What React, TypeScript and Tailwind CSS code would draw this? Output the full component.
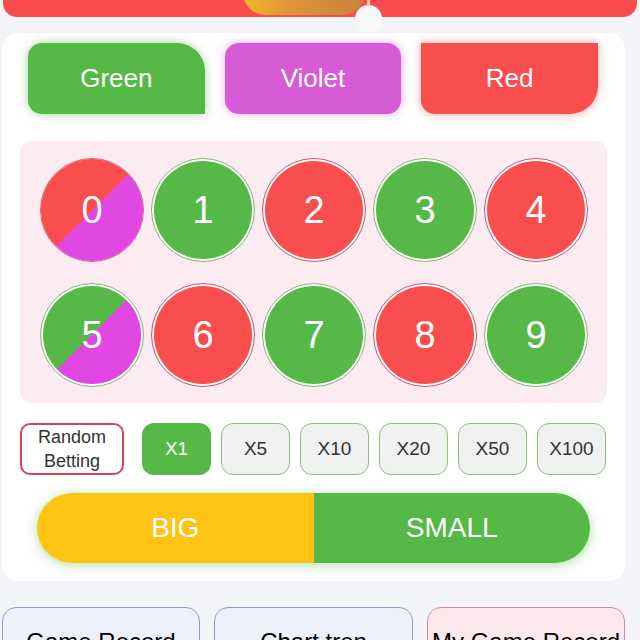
const numbers = [
  { n: 0, bg: "bg-[linear-gradient(135deg,#fa4d4d_50%,#e047e3_50%)]", ring: "border-[#d9687c]", gap: false },
  { n: 1, bg: "bg-[#56b947]", ring: "border-[#7fba6f]", gap: true },
  { n: 2, bg: "bg-[#fa4d4d]", ring: "border-[#c4586c]", gap: true },
  { n: 3, bg: "bg-[#56b947]", ring: "border-[#7fba6f]", gap: true },
  { n: 4, bg: "bg-[#fa4d4d]", ring: "border-[#c4586c]", gap: true },
  { n: 5, bg: "bg-[linear-gradient(135deg,#56b947_50%,#e047e3_50%)]", ring: "border-[#7fba6f]", gap: true },
  { n: 6, bg: "bg-[#fa4d4d]", ring: "border-[#c4586c]", gap: true },
  { n: 7, bg: "bg-[#56b947]", ring: "border-[#7fba6f]", gap: true },
  { n: 8, bg: "bg-[#fa4d4d]", ring: "border-[#c4586c]", gap: true },
  { n: 9, bg: "bg-[#56b947]", ring: "border-[#7fba6f]", gap: true },
];

const multipliers = ["X1", "X5", "X10", "X20", "X50", "X100"];

export default function App() {
  return (
    <div className="w-[640px] h-[640px] overflow-hidden bg-[#f3f4f8] font-['Liberation_Sans',Arial,sans-serif]">
      {/* top banner (only its bottom edge is visible) */}
      <div className="relative mx-[3px] h-[17px] rounded-b-[14px] bg-[#fa4b4e]">
        <div className="absolute left-[240px] top-[-30px] h-[45px] w-[122px] rounded-full bg-[linear-gradient(90deg,#f2b52a,#dc9538_40%,#c9823c)]" />
        <div className="absolute left-[352px] top-[5px] h-[27px] w-[27px] rounded-full bg-[#f6f8fa]" />
        <div className="absolute left-[364px] top-[0px] h-[6px] w-[3px] bg-[#e9c7a0]" />
      </div>

      {/* betting card */}
      <div className="mx-[2px] mt-[16px] w-[623px] rounded-[16px] bg-white pb-[18px] pt-[10px]">
        <div className="grid grid-cols-3 gap-5 px-[26px] pr-[27px]">
          <button className="h-[71px] rounded-[14px_28px_0_14px] bg-[#56b947] text-[26px] text-white shadow-[0_0_10px_rgba(86,185,71,0.55)]">
            Green
          </button>
          <button className="h-[71px] rounded-[14px] bg-[#d75bd6] text-[26px] text-white shadow-[0_0_10px_rgba(215,91,214,0.5)]">
            Violet
          </button>
          <button className="h-[71px] rounded-[0_0_28px_14px] bg-[#fa4d4d] text-[26px] text-white shadow-[0_0_10px_rgba(250,77,77,0.5)]">
            Red
          </button>
        </div>

        <div className="mx-[18px] mt-[27px] rounded-[12px] bg-[#fcebf1] pb-[16px] pl-[20px] pr-[19px] pt-[17px]">
          <div className="grid grid-cols-5 gap-x-[7px] gap-y-[21px]">
            {numbers.map((c) => (
              <div
                key={c.n}
                className={`h-[104px] w-[104px] rounded-full border-[1.5px] ${c.ring} ${c.gap ? "bg-white p-[2px]" : ""}`}
              >
                <div className={`flex h-full w-full items-center justify-center rounded-full ${c.bg} text-[38px] text-white`}>
                  {c.n}
                </div>
              </div>
            ))}
          </div>
        </div>

        <div className="mt-[20px] flex items-center px-[18px]">
          <button className="h-[52px] w-[104px] rounded-[10px] border-2 border-[#d9444f] bg-white text-[18px] leading-[24px] text-[#333]">
            Random
            <br />
            Betting
          </button>
          <div className="ml-[18px] flex gap-[10px]">
            {multipliers.map((m, i) => (
              <button
                key={m}
                className={
                  i === 0
                    ? "h-[52px] w-[69px] rounded-[12px] bg-[#56b947] text-[19px] text-white"
                    : "h-[52px] w-[69px] rounded-[12px] border border-[#8fbf82] bg-[#f1f1f1] text-[19px] text-[#333]"
                }
              >
                {m}
              </button>
            ))}
          </div>
        </div>

        <div className="mx-[35px] mt-[18px] flex h-[70px] overflow-hidden rounded-full shadow-[0_2px_12px_rgba(86,185,71,0.45)]">
          <button className="flex-1 bg-[#fec415] text-[28px] text-white">BIG</button>
          <button className="flex-1 bg-[#56b947] text-[28px] text-white">SMALL</button>
        </div>
      </div>

      {/* record tabs (cut by the viewport) */}
      <div className="mt-[26px] flex gap-[14px] px-[2px] pr-[15px]">
        <div className="h-[70px] w-[198px] rounded-[14px] border border-[#8c9ccc] bg-[#eef1fb] pt-[16px] text-center text-[24px] text-black">
          Game Record
        </div>
        <div className="h-[70px] w-[199px] rounded-[14px] border border-[#8c9ccc] bg-[#eef1fb] pt-[16px] text-center text-[24px] text-black">
          Chart tren
        </div>
        <div className="h-[70px] w-[198px] rounded-[14px] border border-[#d78a96] bg-[#fde9ed] pt-[16px] text-center text-[24px] text-black">
          My Game Record
        </div>
      </div>
    </div>
  );
}
